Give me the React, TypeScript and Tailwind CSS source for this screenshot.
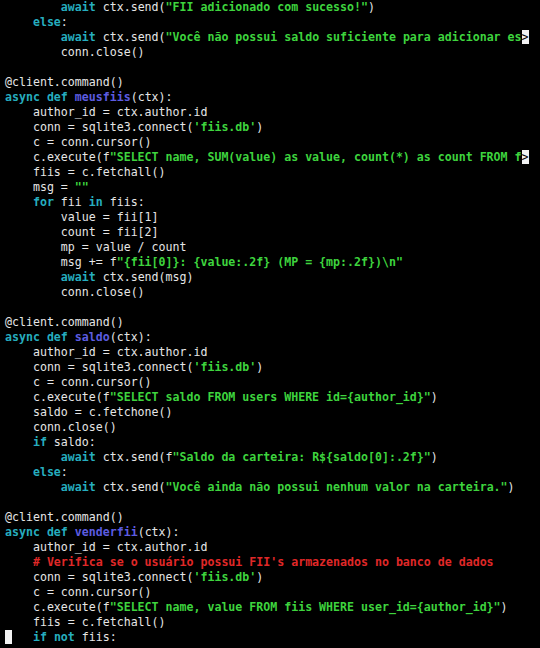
type Tok = [string, string?];

// k = keyword, f = function name, s = string, c = comment, default is plain text
const lines: Tok[][] = [
  [['        '], ['await', 'k'], [' ctx.send('], ['"FII adicionado com sucesso!"', 's'], [')']],
  [['    '], ['else', 'k'], [':']],
  [['        '], ['await', 'k'], [' ctx.send('], ['"Você não possui saldo suficiente para adicionar es', 's'], ['>', 'm']],
  [['        conn.close()']],
  [],
  [['@client.command()']],
  [['async', 'k'], [' '], ['def', 'k'], [' '], ['meusfiis', 'f'], ['(ctx):']],
  [['    author_id = ctx.author.id']],
  [['    conn = sqlite3.connect('], ["'fiis.db'", 's'], [')']],
  [['    c = conn.cursor()']],
  [['    c.execute(f'], ['"SELECT name, SUM(value) as value, count(*) as count FROM f', 's'], ['>', 'm']],
  [['    fiis = c.fetchall()']],
  [['    msg = '], ['""', 's']],
  [['    '], ['for', 'k'], [' fii '], ['in', 'k'], [' fiis:']],
  [['        value = fii[1]']],
  [['        count = fii[2]']],
  [['        mp = value / count']],
  [['        msg += f'], ['"{fii[0]}: {value:.2f} (MP = {mp:.2f})\\n"', 's']],
  [['        '], ['await', 'k'], [' ctx.send(msg)']],
  [['        conn.close()']],
  [],
  [['@client.command()']],
  [['async', 'k'], [' '], ['def', 'k'], [' '], ['saldo', 'f'], ['(ctx):']],
  [['    author_id = ctx.author.id']],
  [['    conn = sqlite3.connect('], ["'fiis.db'", 's'], [')']],
  [['    c = conn.cursor()']],
  [['    c.execute(f'], ['"SELECT saldo FROM users WHERE id={author_id}"', 's'], [')']],
  [['    saldo = c.fetchone()']],
  [['    conn.close()']],
  [['    '], ['if', 'k'], [' saldo:']],
  [['        '], ['await', 'k'], [' ctx.send(f'], ['"Saldo da carteira: R${saldo[0]:.2f}"', 's'], [')']],
  [['    '], ['else', 'k'], [':']],
  [['        '], ['await', 'k'], [' ctx.send('], ['"Você ainda não possui nenhum valor na carteira."', 's'], [')']],
  [],
  [['@client.command()']],
  [['async', 'k'], [' '], ['def', 'k'], [' '], ['venderfii', 'f'], ['(ctx):']],
  [['    author_id = ctx.author.id']],
  [['    '], ["# Verifica se o usuário possui FII's armazenados no banco de dados", 'c']],
  [['    conn = sqlite3.connect('], ["'fiis.db'", 's'], [')']],
  [['    c = conn.cursor()']],
  [['    c.execute(f'], ['"SELECT name, value FROM fiis WHERE user_id={author_id}"', 's'], [')']],
  [['    fiis = c.fetchall()']],
  [['cursor', 'cur'], ['   '], ['if', 'k'], [' '], ['not', 'k'], [' fiis:']],
];

const Seg = ({ tok }: { tok: Tok }) => {
  const [text, kind] = tok;
  if (kind === 'k') return <span className="font-bold text-[#26adbf]">{text}</span>;
  if (kind === 'f') return <span className="font-bold text-[#5c5ce0]">{text}</span>;
  if (kind === 's') return <span className="font-bold text-[#3ed43e]">{text}</span>;
  if (kind === 'c') return <span className="font-bold text-[#e02828]">{text}</span>;
  if (kind === 'm') return <span className="bg-[#f2f2f2] text-black">{text}</span>;
  if (kind === 'cur') return <span className="bg-[#f2f2f2] text-[#f2f2f2]"> </span>;
  return <span>{text}</span>;
};

export default function App() {
  return (
    <div className="h-[648px] w-[540px] overflow-hidden bg-black">
      <div className="flex flex-col pl-[5px] font-['DejaVu_Sans_Mono',monospace] text-[11.6px] leading-[15px] text-[#e6e6e6]">
        {lines.map((line, i) => (
          <div key={i} className="h-[15px] whitespace-pre">
            {line.map((tok, j) => (
              <Seg key={j} tok={tok} />
            ))}
          </div>
        ))}
      </div>
    </div>
  );
}
